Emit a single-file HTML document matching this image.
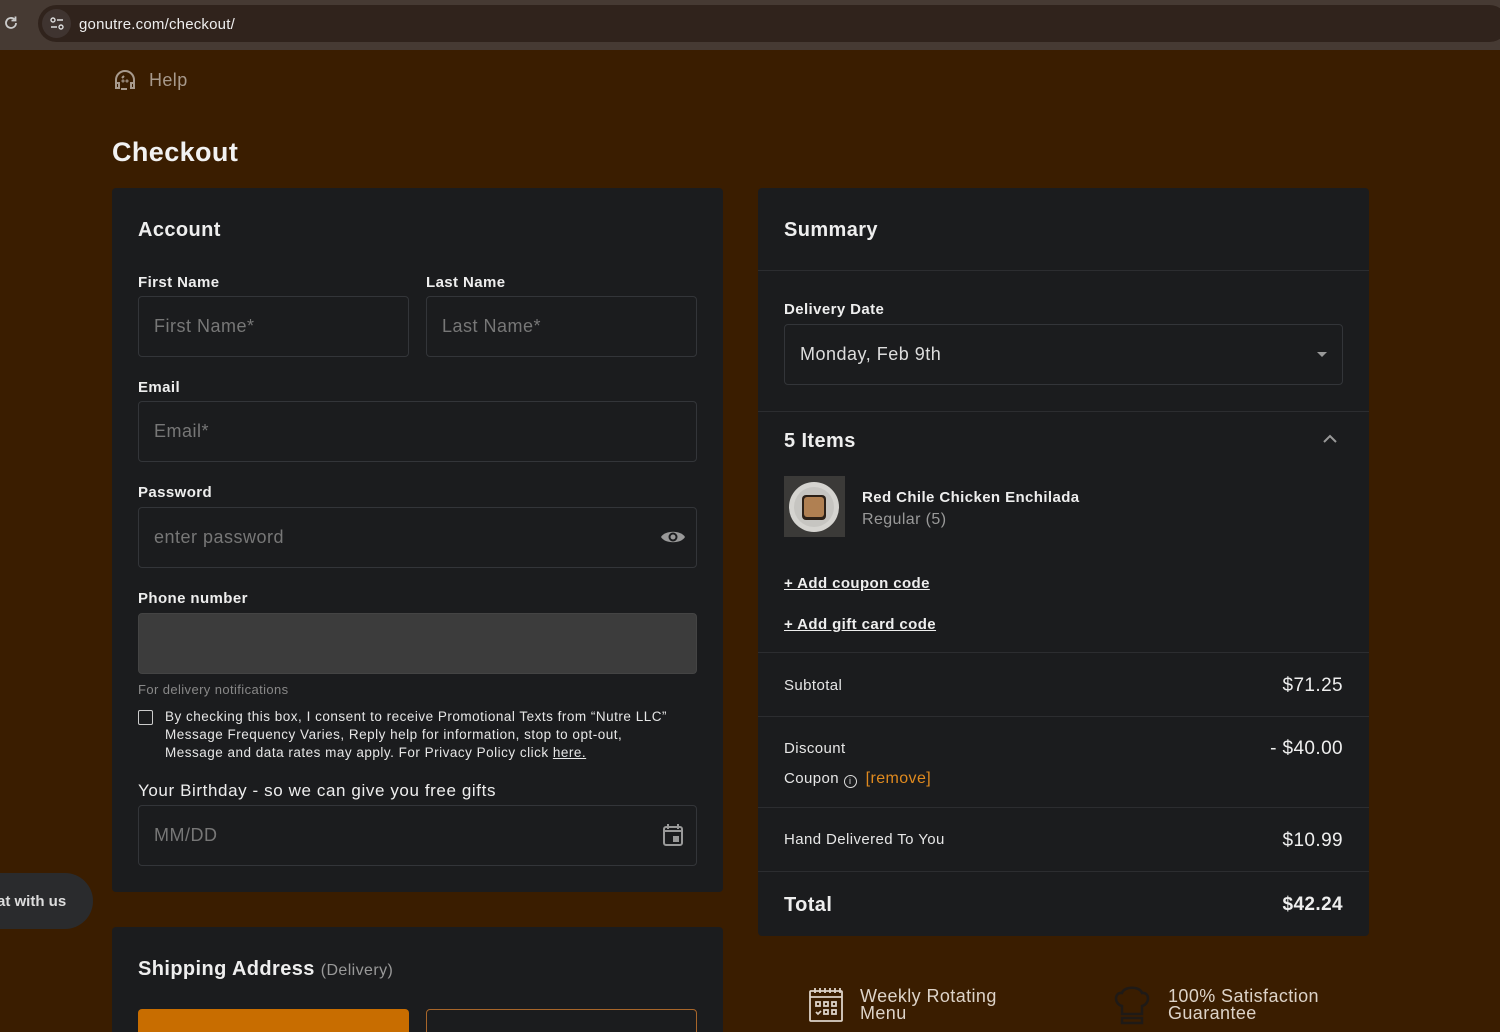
<!DOCTYPE html>
<html><head><meta charset="utf-8">
<style>
*{box-sizing:border-box;margin:0;padding:0}
html{overflow:hidden;width:1500px;height:1032px}
body{width:1500px;height:1032px;overflow:hidden;background:#3a1d00;font-family:"Liberation Sans",sans-serif;color:#eee;position:relative;letter-spacing:0.4px}
.a{position:absolute}
.t{margin-top:2px}
.bar{left:0;top:0;width:1500px;height:50px;background:#463a33}
.pill{left:38px;top:5px;width:1470px;height:37px;background:#30231c;border-radius:19px}
.panel{background:#1b1c1e;border-radius:4px}
.lbl{font-size:15px;font-weight:bold;color:#eee;margin-top:2px}
.inp{border:1px solid #333539;border-radius:4px;background:#1b1c1e;font-size:18px;color:#777;padding-left:15px;display:flex;align-items:center;letter-spacing:0.5px}
.hr{height:1px;background:#2c2d30}
.row{font-size:15px;color:#e6e6e6;margin-top:2px}
.val{font-size:19px;color:#eee;text-align:right;margin-top:2px}
u{text-decoration:underline}
</style></head><body>
<div class="a bar"></div>
<div class="a pill"></div>
<svg class="a" style="left:3px;top:15px" width="16" height="16" viewBox="0 0 16 16"><path d="M13 8a5 5 0 1 1-1.5-3.6" fill="none" stroke="#ccc" stroke-width="1.8"/><path d="M12.5 1.5v4h-4" fill="none" stroke="#ccc" stroke-width="1.8"/></svg>
<div class="a" style="left:42px;top:9px;width:29px;height:29px;border-radius:50%;background:#3f3430"></div>
<svg class="a" style="left:49px;top:16px" width="16" height="16" viewBox="0 0 16 16" fill="none" stroke="#ddd" stroke-width="1.4"><circle cx="4" cy="4" r="2"/><path d="M8 4h6M2 11h6"/><circle cx="12" cy="11" r="2"/></svg>
<div class="a" style="left:79px;top:16px;font-size:15px;color:#eee;letter-spacing:0.2px">gonutre.com/checkout/</div>

<svg class="a" style="left:113px;top:69px" width="24" height="22" viewBox="0 0 24 22" fill="none" stroke="#a89a8c" stroke-width="2"><path d="M3 15v-4a9 9 0 0 1 18 0v4"/><path d="M3 14h3v5H3zM18 14h3v5h-3z"/><path d="M9 9l2-2M8 20h6"/><circle cx="10" cy="12" r=".5"/><circle cx="14" cy="12" r=".5"/></svg>
<div class="a t" style="left:149px;top:68px;font-size:18px;color:#a89a8c">Help</div>
<div class="a t" style="left:112px;top:135px;font-size:27px;font-weight:bold;color:#f2f2f2">Checkout</div>

<div class="a panel" style="left:112px;top:188px;width:611px;height:704px"></div>
<div class="a t" style="left:138px;top:217px;font-size:20px;font-weight:bold">Account</div>
<div class="a lbl" style="left:138px;top:272px">First Name</div>
<div class="a lbl" style="left:426px;top:272px">Last Name</div>
<div class="a inp" style="left:138px;top:296px;width:271px;height:61px">First Name*</div>
<div class="a inp" style="left:426px;top:296px;width:271px;height:61px">Last Name*</div>
<div class="a lbl" style="left:138px;top:377px">Email</div>
<div class="a inp" style="left:138px;top:401px;width:559px;height:61px">Email*</div>
<div class="a lbl" style="left:138px;top:482px">Password</div>
<div class="a inp" style="left:138px;top:507px;width:559px;height:61px">enter password</div>
<svg class="a" style="left:660px;top:528px" width="26" height="18" viewBox="0 0 26 18"><path d="M1 9C5 2 21 2 25 9 21 16 5 16 1 9z" fill="#999"/><circle cx="13" cy="9" r="4.5" fill="#1b1c1e"/><circle cx="13" cy="9" r="2.5" fill="#999"/></svg>
<div class="a lbl" style="left:138px;top:588px">Phone number</div>
<div class="a" style="left:138px;top:613px;width:559px;height:61px;background:#3c3c3c;border:1px solid #444;border-radius:4px"></div>
<div class="a t" style="left:138px;top:680px;font-size:13px;color:#888">For delivery notifications</div>
<div class="a" style="left:138px;top:710px;width:15px;height:15px;border:1.5px solid #ccc;border-radius:2px"></div>
<div class="a t" style="left:165px;top:706px;font-size:13.5px;line-height:18px;color:#e6e6e6;width:560px;letter-spacing:0.5px;white-space:nowrap">By checking this box, I consent to receive Promotional Texts from “Nutre LLC”<br>Message Frequency Varies, Reply help for information, stop to opt-out,<br>Message and data rates may apply. For Privacy Policy click <u>here.</u></div>
<div class="a t" style="left:138px;top:779px;font-size:17px;color:#eee;letter-spacing:0.6px">Your Birthday - so we can give you free gifts</div>
<div class="a inp" style="left:138px;top:805px;width:559px;height:61px">MM/DD</div>
<svg class="a" style="left:662px;top:823px" width="22" height="24" viewBox="0 0 22 24"><rect x="2" y="4" width="18" height="18" rx="2" fill="none" stroke="#999" stroke-width="2"/><path d="M2 8h18M6 1v5M16 1v5" stroke="#999" stroke-width="2"/><rect x="11" y="13" width="6" height="6" fill="#999"/></svg>

<div class="a" style="left:0;top:873px;width:93px;height:56px;background:#2a2b2d;border-radius:0 28px 28px 0"></div>
<div class="a t" style="left:-3px;top:891px;font-size:15px;font-weight:bold;color:#ddd;letter-spacing:0">at with us</div>

<div class="a panel" style="left:112px;top:927px;width:611px;height:120px"></div>
<div class="a t" style="left:138px;top:956px;font-size:20px;font-weight:bold">Shipping Address <span style="font-size:16px;font-weight:normal;color:#999">(Delivery)</span></div>
<div class="a" style="left:138px;top:1009px;width:271px;height:40px;background:#c86d00;border-radius:4px"></div>
<div class="a" style="left:426px;top:1009px;width:271px;height:40px;border:1px solid #a8662a;border-radius:4px"></div>

<div class="a panel" style="left:758px;top:188px;width:611px;height:748px"></div>
<div class="a t" style="left:784px;top:217px;font-size:20px;font-weight:bold">Summary</div>
<div class="a hr" style="left:758px;top:270px;width:611px"></div>
<div class="a lbl" style="left:784px;top:299px">Delivery Date</div>
<div class="a inp" style="left:784px;top:324px;width:559px;height:61px;color:#ddd">Monday, Feb 9th</div>
<div class="a" style="left:1317px;top:352px;width:0;height:0;border-left:5px solid transparent;border-right:5px solid transparent;border-top:5px solid #999"></div>
<div class="a hr" style="left:758px;top:411px;width:611px"></div>
<div class="a t" style="left:784px;top:428px;font-size:20px;font-weight:bold">5 Items</div>
<svg class="a" style="left:1323px;top:434px" width="14" height="10" viewBox="0 0 14 10"><path d="M1 8l6-6 6 6" fill="none" stroke="#999" stroke-width="2"/></svg>
<svg class="a" style="left:784px;top:476px" width="61" height="61" viewBox="0 0 61 61"><rect width="61" height="61" fill="#3b3a38"/><circle cx="30" cy="31" r="25" fill="#d5d4d0"/><circle cx="30" cy="31" r="20" fill="#c6c5c1"/><rect x="18" y="19" width="24" height="25" rx="4" fill="#2c2118"/><rect x="20" y="21" width="20" height="20" rx="3" fill="#b08052"/></svg>
<div class="a t" style="left:862px;top:487px;font-size:15px;font-weight:bold;color:#eee">Red Chile Chicken Enchilada</div>
<div class="a t" style="left:862px;top:509px;font-size:16px;color:#999">Regular (5)</div>
<div class="a t" style="left:784px;top:573px;font-size:15px;font-weight:bold;color:#eee"><u>+ Add coupon code</u></div>
<div class="a t" style="left:784px;top:614px;font-size:15px;font-weight:bold;color:#eee"><u>+ Add gift card code</u></div>
<div class="a hr" style="left:758px;top:652px;width:611px"></div>
<div class="a row" style="left:784px;top:675px">Subtotal</div>
<div class="a val" style="left:1143px;top:673px;width:200px">$71.25</div>
<div class="a hr" style="left:758px;top:716px;width:611px"></div>
<div class="a row" style="left:784px;top:738px">Discount</div>
<div class="a val" style="left:1143px;top:736px;width:200px">- $40.00</div>
<div class="a row" style="left:784px;top:768px">Coupon <span style="display:inline-block;width:13px;height:13px;border:1.3px solid #ddd;border-radius:50%;font-size:9px;text-align:center;line-height:11px;vertical-align:-1px;letter-spacing:0">i</span> &nbsp;<span style="color:#e08a1e;font-size:16px">[remove]</span></div>
<div class="a hr" style="left:758px;top:807px;width:611px"></div>
<div class="a row" style="left:784px;top:829px">Hand Delivered To You</div>
<div class="a val" style="left:1143px;top:828px;width:200px">$10.99</div>
<div class="a hr" style="left:758px;top:871px;width:611px"></div>
<div class="a t" style="left:784px;top:892px;font-size:20px;font-weight:bold">Total</div>
<div class="a val" style="left:1143px;top:892px;width:200px;font-weight:bold">$42.24</div>

<svg class="a" style="left:808px;top:987px" width="36" height="36" viewBox="0 0 36 36" fill="none" stroke="#ddd3c8" stroke-width="1.8"><rect x="2" y="4" width="32" height="30" rx="1"/><path d="M2 10h32M7 1v5M12 1v5M17 1v5M22 1v5M27 1v5M32 1v5"/><rect x="8" y="15" width="4" height="4"/><rect x="16" y="15" width="4" height="4"/><rect x="24" y="15" width="4" height="4"/><path d="M8 25l2 2 3-3"/><rect x="16" y="23" width="4" height="4"/><rect x="24" y="23" width="4" height="4"/></svg>
<div class="a t" style="left:860px;top:986px;font-size:18px;line-height:17px;color:#ddd3c8">Weekly Rotating<br>Menu</div>
<svg class="a" style="left:1110px;top:984px" width="44" height="42" viewBox="0 0 44 42" fill="none" stroke="#1f1a16" stroke-width="2.5"><path d="M12 30V22C4 20 4 8 12 9 14 2 30 2 32 9 40 8 40 20 32 22v8zM12 34h20v5H12z"/></svg>
<div class="a t" style="left:1168px;top:986px;font-size:18px;line-height:17px;color:#ddd3c8">100% Satisfaction<br>Guarantee</div>
</body></html>
